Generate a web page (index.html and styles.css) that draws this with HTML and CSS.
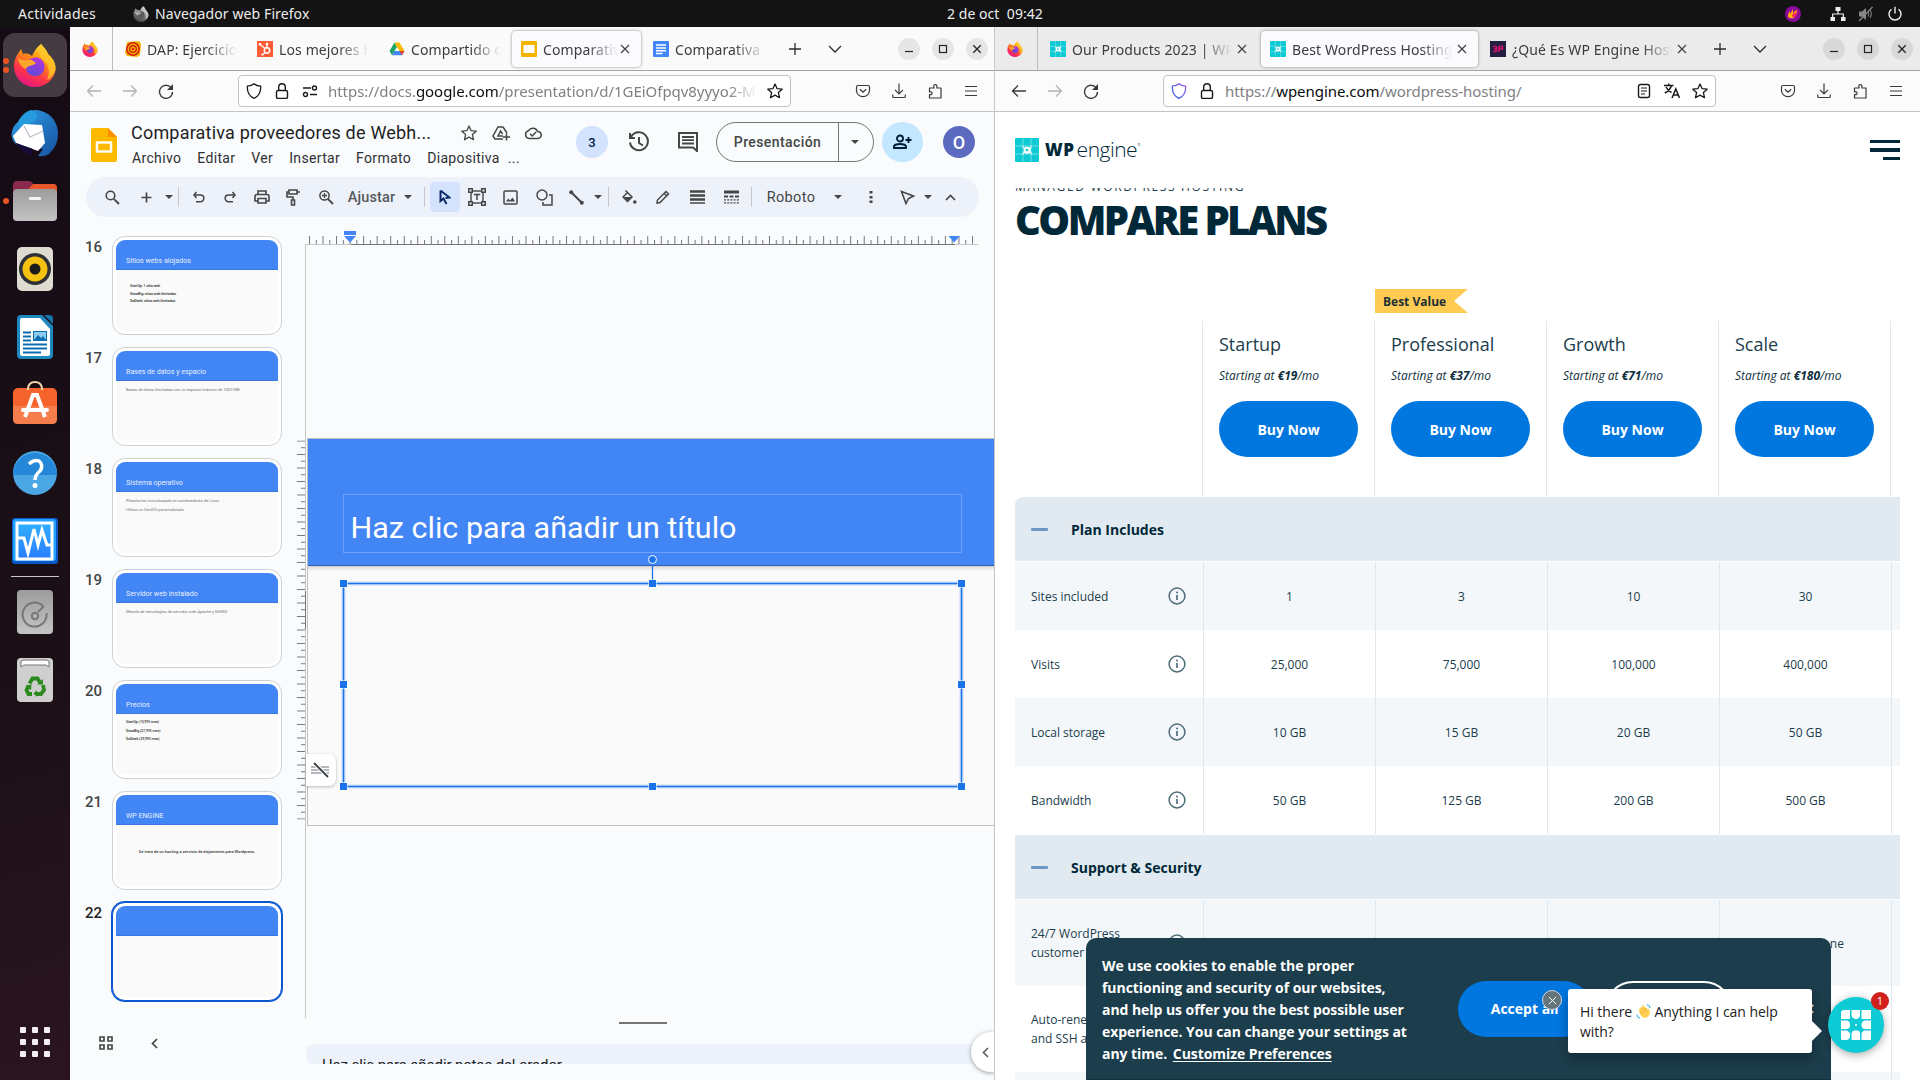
FILE: index.html
```html
<!DOCTYPE html>
<html lang="es">
<head>
<meta charset="utf-8">
<title>Escritorio</title>
<link rel="stylesheet" href="styles.css">
</head>
<body>
<svg width="0" height="0" class="sprite">
  <defs>
    <linearGradient id="gFox" x1=".8" y1="0" x2=".3" y2="1"><stop offset="0" stop-color="#fff44f"/><stop offset=".35" stop-color="#ff980e"/><stop offset=".7" stop-color="#ff3647"/><stop offset="1" stop-color="#e31587"/></linearGradient>
    <linearGradient id="gGlobe" x1=".7" y1="0" x2=".3" y2="1"><stop offset="0" stop-color="#b833e1"/><stop offset="1" stop-color="#5a4bd6"/></linearGradient>
    <linearGradient id="gGray" x1="0" y1="0" x2="0" y2="1"><stop offset="0" stop-color="#9c9c9c"/><stop offset="1" stop-color="#c4c4c4"/></linearGradient>
    <linearGradient id="gBlue" x1="0" y1="0" x2="0" y2="1"><stop offset="0" stop-color="#30b0ff"/><stop offset="1" stop-color="#2a7cff"/></linearGradient>
    <linearGradient id="gBird" x1="0" y1="0" x2="1" y2="1"><stop offset="0" stop-color="#2fa0e8"/><stop offset="1" stop-color="#17509f"/></linearGradient>
    <linearGradient id="gShield" x1="0" y1="1" x2="1" y2="0"><stop offset="0" stop-color="#2a62e8"/><stop offset="1" stop-color="#a05ae8"/></linearGradient>
  </defs>
  <symbol id="fox" viewBox="0 0 44 44">
    <path d="M28 1C31 4 34 8 35 11C41 16 43 22 42.500 27C41 37 32 44 22 44C11 44 2 36 1 25C.5 17 4 12 6 9L8 6L10 11C14 10 17 11 19 13C21 8 24 4 28 1Z" fill="url(#gFox)"/>
    <path d="M28 1C31 4 34 8 35 11C41 16 43 22 42.500 27C41 32 37 36 34 37C38 28 35 20 30 17C26 14 25 7 28 1Z" fill="#ffc529" opacity=".8"/>
    <path d="M13 23C14 16 22 12 28 16C33 20 33 28 27 32C20 35 12 31 13 23Z" fill="url(#gGlobe)"/>
    <path d="M5 15C9 18 14 17 19 17L23 20C20 23 14 22 13 26C10 25 6 22 5 15Z" fill="#ffa72a"/>
  </symbol>
  <symbol id="wpe" viewBox="0 0 24 24">
    <rect width="24" height="24" rx="1" fill="#0ecad4"/>
    <path d="M8 0V24M16 0V24M0 8H24M0 16H24" stroke="#8ce6ea" stroke-width=".8"/>
    <path d="M6.500 7L9.500 9.500Q12 8.200 14.500 9.500L17 7L16 10Q15 12 16 14L17.500 17L14.500 15Q12 16.300 9.500 15L6.500 17.500L8.500 14Q9.500 12 8.500 10Z" fill="#fff"/>
    <circle cx="12" cy="12" r="1.300" fill="#0ecad4"/>
  </symbol>
  <symbol id="back" viewBox="0 0 16 16"><path d="M15 8H1.500M7 2.500L1.500 8L7 13.500" fill="none" stroke="currentColor" stroke-width="1.300"/></symbol>
  <symbol id="fwd" viewBox="0 0 16 16"><path d="M1 8H14.500M9 2.500L14.500 8L9 13.500" fill="none" stroke="currentColor" stroke-width="1.300"/></symbol>
  <symbol id="reload" viewBox="0 0 16 16"><path d="M13.600 5.500A6.500 6.500 0 1 0 14.500 9" fill="none" stroke="currentColor" stroke-width="1.400"/><path d="M15 1V7H9Z" fill="currentColor"/></symbol>
  <symbol id="shield" viewBox="0 0 16 16"><path d="M8 .8C9.500 2.200 12 3 14.600 3.200C15 8 13 13 8 15.400C3 13 1 8 1.400 3.200C4 3 6.500 2.200 8 .8Z" fill="none" stroke="currentColor" stroke-width="1.300"/></symbol>
  <symbol id="lock" viewBox="0 0 16 16"><rect x="2.500" y="7.500" width="11" height="8" rx="1.500" fill="none" stroke="currentColor" stroke-width="1.400"/><path d="M4.700 7.500V4A3.300 3.300 0 0 1 11.300 4V7.500" fill="none" stroke="currentColor" stroke-width="1.400"/></symbol>
  <symbol id="perm" viewBox="0 0 16 16"><path d="M1 5H9M8 11.500H15" stroke="currentColor" stroke-width="1.400"/><circle cx="12.500" cy="5" r="2" fill="none" stroke="currentColor" stroke-width="1.400"/><circle cx="3.500" cy="11.500" r="2" fill="none" stroke="currentColor" stroke-width="1.400"/></symbol>
  <symbol id="star" viewBox="0 0 16 16"><path d="M8 1L10.100 5.700L15.200 6.200L11.400 9.600L12.500 14.700L8 12.100L3.500 14.700L4.600 9.600L.8 6.200L5.900 5.700Z" fill="none" stroke="currentColor" stroke-width="1.300" stroke-linejoin="round"/></symbol>
  <symbol id="pocket" viewBox="0 0 16 16"><path d="M3 2.500H13Q14.500 2.500 14.500 4V7.500A6.500 6.200 0 0 1 1.500 7.500V4Q1.500 2.500 3 2.500Z M4.800 6.300L8 9.300L11.200 6.300" fill="none" stroke="currentColor" stroke-width="1.200"/></symbol>
  <symbol id="dl" viewBox="0 0 16 16"><path d="M8 .5V10.500M4 6.800L8 10.800L12 6.800M1.700 11.500V13.500Q1.700 14.500 2.800 14.500H13.200Q14.300 14.500 14.300 13.500V11.500" fill="none" stroke="currentColor" stroke-width="1.200"/></symbol>
  <symbol id="ext" viewBox="0 0 16 16"><path d="M2.500 15V11.500C6 12.500 6 8 2.500 9V5H7C5.500 .3 11 .3 9.800 5H14V15Z" fill="none" stroke="currentColor" stroke-width="1.200" stroke-linejoin="round"/></symbol>
  <symbol id="menu" viewBox="0 0 16 16"><path d="M2 3.500H14M2 8H14M2 12.500H14" stroke="currentColor" stroke-width="1.200"/></symbol>
  <symbol id="x" viewBox="0 0 10 10"><path d="M1 1L9 9M9 1L1 9" stroke="currentColor" stroke-width="1.100"/></symbol>
  <symbol id="plus" viewBox="0 0 14 14"><path d="M7 1V13M1 7H13" stroke="currentColor" stroke-width="1.300"/></symbol>
  <symbol id="chev" viewBox="0 0 14 14"><path d="M1 4L7 10L13 4" fill="none" stroke="currentColor" stroke-width="1.300"/></symbol>
  <symbol id="reader" viewBox="0 0 16 16"><rect x="2.500" y="1.500" width="11" height="13" rx="2" fill="none" stroke="currentColor" stroke-width="1.400"/><path d="M5 5H11M5 8H11M5 11H9" stroke="currentColor" stroke-width="1.200"/></symbol>
  <symbol id="translate" viewBox="0 0 16 16"><path d="M0 2.500H9.500M4.700 .5V2.500M7.500 2.500Q6 7.500 .8 10M2 4Q4 8 7.500 9.500M8 15L11.800 6L15.500 15M9.300 12H14.300" fill="none" stroke="currentColor" stroke-width="1.500"/></symbol>
  <symbol id="wmin" viewBox="0 0 22 22"><circle cx="11" cy="11" r="11" fill="#000" opacity=".08"/><path d="M7 13.500H15" stroke="#222" stroke-width="1.200"/></symbol>
  <symbol id="wmax" viewBox="0 0 22 22"><circle cx="11" cy="11" r="11" fill="#000" opacity=".08"/><rect x="7.500" y="7.500" width="7" height="7" fill="none" stroke="#222" stroke-width="1.200"/></symbol>
  <symbol id="wclose" viewBox="0 0 22 22"><circle cx="11" cy="11" r="11" fill="#000" opacity=".08"/><path d="M7.300 7.300L14.700 14.700M14.700 7.300L7.300 14.700" stroke="#222" stroke-width="1.300"/></symbol>
  <symbol id="caret" viewBox="0 0 8 4"><path d="M0 0H8L4 4Z" fill="currentColor"/></symbol>
  <symbol id="info" viewBox="0 0 18 18"><circle cx="9" cy="9" r="7.900" fill="none" stroke="currentColor" stroke-width="1.500"/><path d="M9 8V13" stroke="currentColor" stroke-width="1.700"/><circle cx="9" cy="5.500" r="1" fill="currentColor"/></symbol>
</svg>

<header class="topbar">
  <span class="act">Actividades</span>
  <span class="app"><svg width="16" height="16" class="mono"><use href="#fox"/></svg><span>Navegador web Firefox</span></span>
  <span class="clock">2 de oct&nbsp; 09:42</span>
  <span class="tray">
    <svg width="16" height="16" viewBox="0 0 16 16"><circle cx="8" cy="8" r="8" fill="#8a0a9c"/><path d="M3 11Q3 7 5 5V8L8 3V7L12 3.500Q12 9 9 12Q5 13 3 11Z" fill="#ffb000"/><path d="M7 10L9 5L9 8L13 5Q12 10 9 12Z" fill="#f0246c"/></svg>
    <svg class="net" width="16" height="16" viewBox="0 0 16 16"><path d="M5.500 1H10.500V5H5.500ZM.5 11H5V15H.5ZM11 11H15.500V15H11Z" fill="#eee"/><path d="M8 5V8M2.700 11V8H13.300V11" fill="none" stroke="#eee" stroke-width="1.200"/></svg>
    <svg class="vol" width="16" height="16" viewBox="0 0 16 16"><path d="M1 5.500H4L8 2V14L4 10.500H1Z" fill="#888"/><path d="M10 5.500Q11.500 8 10 10.500M12 4Q14.500 8 12 12" fill="none" stroke="#777" stroke-width="1.200"/><path d="M1 15L14.500 1" stroke="#888" stroke-width="1.300"/></svg>
    <svg width="16" height="16" viewBox="0 0 16 16"><path d="M4.500 3.200A6 6 0 1 0 11.500 3.200M8 .8V7.500" fill="none" stroke="#eee" stroke-width="1.400"/></svg>
  </span>
</header>

<div class="desktop">
<nav class="dock">
  <div class="app-tile on two"><svg width="44" height="44"><use href="#fox"/></svg></div>
  <div class="app-tile"><svg width="48" height="48" viewBox="0 0 48 48"><path d="M7 13Q14 0 26 1Q44 4 47 22Q48 36 38 45Q33 48 27 47L32 40L14 38Q2 38 .5 26Q1 17 7 13Z" fill="url(#gBird)"/><path d="M7 13Q12 3 20 1Q29 4 25 11L15 17L9 22Z" fill="#279be0"/><path d="M2 27L13 15L31 16L34 34L27 42L5 34Z" fill="#fff"/><path d="M13 17L19 28L32 22" fill="none" stroke="#b9bec8" stroke-width="1.200"/><path d="M3 32Q9 42 20 47L22 40L5 34Z" fill="#160b38"/></svg></div>
  <div class="app-tile one"><svg width="46" height="42" viewBox="0 0 46 42"><path d="M1 12V5Q1 1 5 1H16Q20 1 21 4H41Q45 4 45 8V14H1Z" fill="#8b2a4c"/><path d="M21 4H41Q45 4 45 8V14H12Z" fill="#e9562a"/><rect x="1" y="9" width="44" height="32" rx="4" fill="url(#gGray)"/><rect x="17" y="17" width="12" height="3" rx="1" fill="#f4f4f4"/></svg></div>
  <div class="app-tile"><svg width="38" height="46" viewBox="0 0 38 46"><rect x="1" y="1" width="36" height="44" rx="5" fill="#dedbd0"/><circle cx="19" cy="23" r="16" fill="#2f3136"/><circle cx="19" cy="23" r="12.500" fill="#f5c211"/><circle cx="19" cy="23" r="5.500" fill="#1b1b1b"/></svg></div>
  <div class="app-tile"><svg width="38" height="46" viewBox="0 0 38 46"><path d="M5 1H26L37 12V41Q37 45 33 45H5Q1 45 1 41V5Q1 1 5 1Z" fill="#1e88c0"/><path d="M28 1H33Q37 1 37 5V10Z" fill="#1574a8"/><path d="M4 6Q4 4 6 4H24L34 15V40Q34 42 32 42H6Q4 42 4 40Z" fill="#fff"/><path d="M7 18.500H15M7 22.500H15M7 26.500H15M7 30.500H31M7 34.500H31M7 38.500H25" stroke="#0b6db0" stroke-width="2"/><rect x="17.500" y="17.500" width="13" height="9" fill="#8ccaf0" stroke="#0b6db0"/><path d="M18 26L22 21L25 24L27 22L30 26Z" fill="#0b6db0"/></svg></div>
  <div class="app-tile store"><svg width="46" height="44" viewBox="0 0 46 44"><rect x="1" y="7" width="44" height="36" rx="5" fill="#f4642c"/><path d="M1 25H45V38Q45 43 40 43H6Q1 43 1 38Z" fill="#f67e4c"/><path d="M16 9V7Q17 1 23 1T30 7V9" fill="none" stroke="#f3d2a8" stroke-width="2"/><path d="M13 36L21 14H25L33 36" fill="none" stroke="#fff" stroke-width="4"/><path d="M11 29H35" stroke="#fff" stroke-width="4" stroke-linecap="round"/></svg></div>
  <div class="app-tile"><svg width="46" height="46" viewBox="0 0 46 46"><circle cx="23" cy="23" r="22" fill="#4aa7e4"/><path d="M1 25A22 22 0 0 1 45 25Z" fill="#2487d8"/><path d="M17 14Q22 9 27 11Q32 15 28 21Q23 25 23 30" fill="none" stroke="#fff" stroke-width="3.500"/><circle cx="23" cy="35.500" r="2.500" fill="#fff"/></svg></div>
  <div class="app-tile"><svg width="46" height="46" viewBox="0 0 46 46"><rect x="0" y="0" width="46" height="46" rx="3" fill="#0a58c8"/><rect x="1" y="1" width="43" height="42" rx="3" fill="#25a0ff"/><rect x="5" y="5" width="35" height="36" fill="url(#gBlue)" stroke="#fff" stroke-width="3"/><path d="M6 20H12L16 35L22 11L26 27L30 12L35 27H40" fill="none" stroke="#fff" stroke-width="3"/></svg></div>
  <hr class="dock-sep">
  <div class="app-tile"><svg width="38" height="46" viewBox="0 0 38 46"><rect x="1" y="1" width="36" height="44" rx="4" fill="url(#gGray)"/><path d="M27 17A12 12 0 1 0 30.500 24" fill="none" stroke="#777" stroke-width="2"/><path d="M22 23L28 17" stroke="#777" stroke-width="2"/><circle cx="19" cy="27" r="3.200" fill="none" stroke="#777" stroke-width="2"/></svg></div>
  <div class="app-tile"><svg width="38" height="46" viewBox="0 0 38 46"><rect x="1" y="1" width="36" height="44" rx="4" fill="#cfcfcf"/><path d="M5 10V5Q5 3 8 3H30Q33 3 33 5V10L30 8H8Z" fill="#fff" stroke="#777"/><path d="M13.500 26.500L16.500 21.500H21.500L24 25.500M27 28L28 33L25 37H20M16 37H12.500L10.500 33L13 28.500" fill="none" stroke="#2b8a1e" stroke-width="3.800"/><path d="M21 27.500H27V22ZM21 33V40L17.500 36.500ZM9 29L15.500 27.500L15 33Z" fill="#2b8a1e"/></svg></div>
  <div class="apps-grid"><i></i><i></i><i></i><i></i><i></i><i></i><i></i><i></i><i></i></div>
</nav>

<section class="win left-win">
  <div class="tabbar">
    <div class="pinned"><svg width="16" height="16"><use href="#fox"/></svg></div>
    <div class="tab"><svg width="16" height="16" viewBox="0 0 16 16"><path d="M2 1L14 0L16 3L15 14L12 16L2 15L0 12Z" fill="#f2b705"/><circle cx="8" cy="8" r="6.200" fill="none" stroke="#d81e05" stroke-width="1.600"/><circle cx="8" cy="8" r="3.300" fill="none" stroke="#d81e05" stroke-width="1.400"/><circle cx="8" cy="8" r="1.200" fill="#d81e05"/></svg><span class="lbl">DAP: Ejercicios</span></div>
    <div class="tab"><svg width="16" height="16" viewBox="0 0 16 16"><rect width="16" height="16" fill="#ff5c35"/><circle cx="10" cy="9.500" r="2.700" fill="none" stroke="#fff" stroke-width="1.500"/><path d="M2.500 3L8 7.500M10 3V7M8 11.500L5.500 14" stroke="#fff" stroke-width="1.200"/><circle cx="3" cy="3.200" r="1.300" fill="#fff"/><circle cx="10" cy="3" r="1.300" fill="#fff"/><circle cx="5.300" cy="13.500" r="1.100" fill="#fff"/></svg><span class="lbl">Los mejores host</span></div>
    <div class="tab"><svg width="16" height="16" viewBox="0 0 16 16"><path d="M5.500 1.500L.5 10L3 14.300L8 5.700Z" fill="#1ea362"/><path d="M5.500 1.500H10.500L15.500 10H10.500Z" fill="#ffba00"/><path d="M3 14.300L5.500 10H15.500L13 14.300Z" fill="#4285f4"/><path d="M10.500 10H15.500L13 14.300Z" fill="#ea4335"/></svg><span class="lbl">Compartido con</span></div>
    <div class="tab active"><svg width="16" height="16" viewBox="0 0 16 16"><rect width="16" height="16" rx="1" fill="#f4b400"/><rect x="2.500" y="4" width="11" height="8" fill="#fff"/></svg><span class="lbl">Comparativa</span><svg class="tx" width="10" height="10"><use href="#x"/></svg></div>
    <div class="tab"><svg width="16" height="16" viewBox="0 0 16 16"><rect width="16" height="16" rx="1" fill="#4285f4"/><path d="M3 4H13M3 7H13M3 9.800H13M3 12.500H9.500" stroke="#fff" stroke-width="1.500"/></svg><span class="lbl">Comparativa d</span></div>
    <div class="tbtn plus"><svg width="14" height="14"><use href="#plus"/></svg></div>
    <div class="tbtn"><svg width="14" height="14"><use href="#chev"/></svg></div>
    <div class="wbtns"><svg width="22" height="22"><use href="#wmin"/></svg><svg width="22" height="22"><use href="#wmax"/></svg><svg width="22" height="22"><use href="#wclose"/></svg></div>
  </div>
  <div class="navbar">
    <span class="nb dis"><svg width="16" height="16"><use href="#back"/></svg></span>
    <span class="nb dis"><svg width="16" height="16"><use href="#fwd"/></svg></span>
    <span class="nb"><svg width="16" height="16"><use href="#reload"/></svg></span>
    <div class="url">
      <span class="ub"><svg width="16" height="16"><use href="#shield"/></svg></span><span class="ub"><svg width="16" height="16"><use href="#lock"/></svg></span><span class="ub"><svg width="16" height="16"><use href="#perm"/></svg></span>
      <span class="addr fade">https://docs.<b>google.com</b>/presentation/d/1GEiOfpqv8yyyo2-M</span>
      <span class="ub"><svg width="16" height="16"><use href="#star"/></svg></span>
    </div>
    <div class="nav-right"><span class="nb"><svg width="16" height="16"><use href="#pocket"/></svg></span><span class="nb"><svg width="16" height="16"><use href="#dl"/></svg></span><span class="nb"><svg width="16" height="16"><use href="#ext"/></svg></span><span class="nb"><svg width="16" height="16"><use href="#menu"/></svg></span></div>
  </div>

  <div class="slides">
    <div class="doc-head">
      <svg class="doc-ico" width="26" height="34" viewBox="0 0 26 34"><path d="M2 0H17L26 9V32Q26 34 24 34H2Q0 34 0 32V2Q0 0 2 0Z" fill="#ffba00"/><path d="M17 0L26 9H17Z" fill="#ff9100"/><rect x="6" y="14.500" width="14" height="9" fill="none" stroke="#fff" stroke-width="2.400"/></svg>
      <div class="doc-meta">
        <div class="title-row">
          <span class="doc-title">Comparativa proveedores de Webh...</span>
          <svg width="16" height="16"><use href="#star"/></svg>
          <svg width="18" height="16" viewBox="0 0 18 16"><path d="M11 14H3L1 11L6 2H11L15 8M11 11H6L8.500 6L10.500 9M14.500 8.500V15.500M11 12H18" fill="none" stroke="currentColor" stroke-width="1.500"/></svg>
          <svg width="18" height="14" viewBox="0 0 18 14"><path d="M5 12.500A4 4 0 0 1 4.500 4.700A5 5 0 0 1 13.500 5.500A3.500 3.500 0 0 1 14 12.500Z" fill="none" stroke="currentColor" stroke-width="1.500"/><path d="M6 7.800L8.200 10L12 6" fill="none" stroke="currentColor" stroke-width="1.500"/></svg>
        </div>
        <div class="menus"><span>Archivo</span><span>Editar</span><span>Ver</span><span>Insertar</span><span>Formato</span><span>Diapositiva</span><span class="more">...</span></div>
      </div>
      <div class="doc-actions">
        <span class="count">3</span>
        <svg class="hist" width="22" height="22" viewBox="0 0 22 22"><path d="M3 6A9 9 0 1 1 2 11.500M2 2V7H7M11 6V12L15 14.500" fill="none" stroke="currentColor" stroke-width="2"/></svg>
        <svg class="comm" width="20" height="20" viewBox="0 0 20 20"><path d="M1 1H19V19L15 15.500H1Z" fill="none" stroke="currentColor" stroke-width="2"/><path d="M4 5H16M4 8.200H16M4 11.500H16" stroke="currentColor" stroke-width="1.800"/></svg>
        <div class="present"><span>Presentación</span><i><svg width="8" height="4"><use href="#caret"/></svg></i></div>
        <span class="share"><svg width="20" height="16" viewBox="0 0 20 16"><circle cx="7" cy="4.500" r="3" fill="none" stroke="currentColor" stroke-width="1.900"/><path d="M1 14V12Q2.500 10 7 10T13 12V14ZM15.500 3V9M12.500 6H18.500" fill="none" stroke="currentColor" stroke-width="1.900"/></svg></span>
        <span class="avatar">O</span>
      </div>
    </div>

    <div class="toolbar">
      <span class="w33"><svg width="15" height="15" viewBox="0 0 15 15"><circle cx="5.500" cy="5.500" r="4.300" fill="none" stroke="currentColor" stroke-width="1.600"/><path d="M8.800 8.800L14 14" stroke="currentColor" stroke-width="1.900"/></svg></span>
      <span class="w34"><svg width="11" height="11" viewBox="0 0 11 11"><path d="M5.500 .5V10.500M.5 5.500H10.500" stroke="currentColor" stroke-width="1.700"/></svg></span>
      <span class="w11"><svg width="8" height="4"><use href="#caret"/></svg></span>
      <span class="w8"><i class="sep"></i></span>
      <span class="w33"><svg width="12" height="12" viewBox="0 0 12 12"><path d="M3.500 1L1 4L3.500 7M1 4H7.500A3.300 3.300 0 0 1 7.500 10.700H3" fill="none" stroke="currentColor" stroke-width="1.500"/></svg></span>
      <span class="w30"><svg width="12" height="12" viewBox="0 0 12 12"><path d="M8.500 1L11 4L8.500 7M11 4H4.500A3.300 3.300 0 0 0 4.500 10.700H9" fill="none" stroke="currentColor" stroke-width="1.500"/></svg></span>
      <span class="w34"><svg width="16" height="14" viewBox="0 0 16 14"><path d="M4 4V1H12V4M4 11H1V6.500Q1 4.500 3 4.500H13Q15 4.500 15 6.500V11H12M4 8.500H12V13H4Z" fill="none" stroke="currentColor" stroke-width="1.600"/></svg></span>
      <span class="w28"><svg width="15" height="17" viewBox="0 0 15 17"><path d="M3 1H11V5H3ZM3 3H1V8H7V11M11 3H14M5.500 11H8.500V16H5.500Z" fill="none" stroke="currentColor" stroke-width="1.600"/></svg></span>
      <span class="w38"><svg width="15" height="15" viewBox="0 0 15 15"><circle cx="5.500" cy="5.500" r="4.600" fill="none" stroke="currentColor" stroke-width="1.500"/><path d="M9 9L14 14" stroke="currentColor" stroke-width="1.800"/><path d="M5.500 3V8M3 5.500H8" stroke="currentColor" stroke-width="1.300"/></svg></span>
      <span class="w53 txt">Ajustar</span>
      <span class="w20"><svg width="8" height="4"><use href="#caret"/></svg></span>
      <span class="w12"><i class="sep"></i></span>
      <span class="w30 sel"><svg width="12" height="16" viewBox="0 0 12 16"><path d="M1.500 1.500V12L4.500 9.500L7.500 15M1.500 1.500L10.500 8.500L6.500 9" fill="none" stroke="#0b2a66" stroke-width="2"/></svg></span>
      <span class="w34"><svg width="18" height="18" viewBox="0 0 18 18"><rect x="3" y="3" width="12" height="12" fill="none" stroke="currentColor" stroke-width="1.400"/><path d="M0 0H5V5H0ZM13 0H18V5H13ZM0 13H5V18H0ZM13 13H18V18H13Z" fill="currentColor"/><path d="M1.500 1.500H3.500V3.500H1.500ZM14.500 1.500H16.500V3.500H14.500ZM1.500 14.500H3.500V16.500H1.500ZM14.500 14.500H16.500V16.500H14.500Z" fill="#edf2fa"/><path d="M5.800 6.500H12.200M9 6.500V12" stroke="currentColor" stroke-width="1.500"/></svg></span>
      <span class="w32"><svg width="15" height="15" viewBox="0 0 15 15"><rect x="1" y="1" width="13" height="13" rx="1" fill="none" stroke="currentColor" stroke-width="1.500"/><path d="M3 11.500L5.200 8.500L7 10.500L9.500 7.500L12 11.500Z" fill="currentColor"/></svg></span>
      <span class="w36"><svg width="17" height="17" viewBox="0 0 17 17"><circle cx="6" cy="6" r="5" fill="none" stroke="currentColor" stroke-width="1.500"/><path d="M13 6H16V16H7V13" fill="none" stroke="currentColor" stroke-width="1.500"/></svg></span>
      <span class="w28"><svg width="15" height="15" viewBox="0 0 15 15"><path d="M2 2L13 13" stroke="currentColor" stroke-width="2"/><circle cx="2.200" cy="2.200" r="2" fill="currentColor"/><circle cx="12.800" cy="12.800" r="2" fill="currentColor"/></svg></span>
      <span class="w16"><svg width="8" height="4"><use href="#caret"/></svg></span>
      <span class="w4"><i class="sep"></i></span>
      <span class="w38"><svg width="15" height="15" viewBox="0 0 15 15"><path d="M3.500 .5L5.500 2.500M5.500 2.500L10 7L5.500 11.500L1 7Z" fill="none" stroke="currentColor" stroke-width="1.500"/><path d="M1.500 7H9.500L5.500 11Z" fill="currentColor"/><circle cx="12.800" cy="12" r="1.800" fill="currentColor"/></svg></span>
      <span class="w30"><svg width="14" height="14" viewBox="0 0 14 14"><path d="M1 13L1.500 10L10 1.500L12.500 4L4 12.500ZM8.300 3.500L10.500 5.700" fill="none" stroke="currentColor" stroke-width="1.500"/></svg></span>
      <span class="w38"><svg width="15" height="14" viewBox="0 0 15 14"><path d="M0 1.500H15M0 5.500H15M0 9.500H15" stroke="currentColor" stroke-width="2.400"/><path d="M0 13H15" stroke="currentColor" stroke-width="1.500"/></svg></span>
      <span class="w30"><svg width="15" height="14" viewBox="0 0 15 14"><path d="M0 2H15" stroke="currentColor" stroke-width="3"/><path d="M0 6.500H15" stroke="currentColor" stroke-width="2" stroke-dasharray="4 1.500"/><path d="M0 9.800H15M0 12.800H15" stroke="currentColor" stroke-width="1.300" stroke-dasharray="2 1.200"/></svg></span>
      <span class="w10"><i class="sep"></i></span>
      <span class="w69 txt rob">Roboto</span>
      <span class="w26"><svg width="8" height="4"><use href="#caret"/></svg></span>
      <span class="w40"><svg width="4" height="14" viewBox="0 0 4 14"><path d="M.5 1H3.500V3.500H.5ZM.5 6H3.500V8.500H.5ZM.5 10.500H3.500V13H.5Z" fill="currentColor"/></svg></span>
      <span class="w32"><svg width="15" height="15" viewBox="0 0 15 15"><path d="M1.500 1.500L13.500 6L8.500 8.500L6 13.500Z" fill="none" stroke="currentColor" stroke-width="1.600"/></svg></span>
      <span class="w10"><svg width="8" height="4"><use href="#caret"/></svg></span>
      <span class="w34"><svg width="11" height="7" viewBox="0 0 11 7"><path d="M1 6L5.500 1.500L10 6" fill="none" stroke="currentColor" stroke-width="1.700"/></svg></span>
    </div>

    <div class="editor">
      <aside class="film">
        <div class="thumbs">
          <div class="th"><b>16</b><div class="card"><div class="sl"><h4>Sitios webs alojados</h4><p class="ind bold">StartUp: 1 sitio web<br>GrowBig: sitios web ilimitados<br>GoGeek: sitios web ilimitados</p></div></div></div>
          <div class="th"><b>17</b><div class="card"><div class="sl"><h4>Bases de datos y espacio</h4><p>Bases de datos ilimitadas con un espacio máximo de 1000 MB</p></div></div></div>
          <div class="th"><b>18</b><div class="card"><div class="sl"><h4>Sistema operativo</h4><p>Plataforma única basada en contenedores de Linux.<br>Utiliza un CentOS personalizado.</p></div></div></div>
          <div class="th"><b>19</b><div class="card"><div class="sl"><h4>Servidor web instalado</h4><p>Mezcla de tecnologías de servidor web Apache y NGINX</p></div></div></div>
          <div class="th"><b>20</b><div class="card"><div class="sl"><h4>Precios</h4><p class="bold">StartUp (15,99€ mes)<br>GrowBig (27,99€ mes)<br>GoGeek (39,99€ mes)</p></div></div></div>
          <div class="th"><b>21</b><div class="card"><div class="sl"><h4>WP ENGINE</h4><p class="mid bold">Se trata de un hosting o servicio de alojamiento para Wordpress.</p></div></div></div>
          <div class="th cur"><b>22</b><div class="card"><div class="sl"><h4>&nbsp;</h4></div></div></div>
        </div>
        <div class="film-foot">
          <svg width="14" height="14" viewBox="0 0 14 14"><path d="M1 1H5V5H1ZM9 1H13V5H9ZM1 9H5V13H1ZM9 9H13V13H9Z" fill="none" stroke="currentColor" stroke-width="1.700"/></svg>
          <svg width="7" height="11" viewBox="0 0 7 11"><path d="M6 1L1.500 5.500L6 10" fill="none" stroke="currentColor" stroke-width="1.700"/></svg>
        </div>
      </aside>

      <div class="stage">
        <svg class="canvas" width="704" height="801" viewBox="290 217 704 801">
          <defs>
            <pattern id="tickH" x="309" y="236" width="13.530" height="8" patternUnits="userSpaceOnUse"><path d="M0 0H1V8H0ZM6.800 4H7.800V8H6.800Z" fill="#73787c"/></pattern>
            <pattern id="tickV" x="297" y="440.500" width="8" height="13.500" patternUnits="userSpaceOnUse"><path d="M0 0H8V1H0ZM4 6.800H8V7.800H4Z" fill="#73787c"/></pattern>
            <linearGradient id="drop" x1="0" y1="0" x2="0" y2="1"><stop offset="0" stop-color="#000" stop-opacity=".32"/><stop offset=".3" stop-color="#000" stop-opacity=".12"/><stop offset="1" stop-color="#000" stop-opacity="0"/></linearGradient>
          </defs>
          <rect x="309" y="236" width="664" height="8" fill="url(#tickH)"/>
          <rect x="305" y="244" width="673" height="1" fill="#c4c7c5"/><rect x="351" y="244" width="604" height="1" fill="#757575"/>
          <rect x="297" y="440.500" width="8" height="379" fill="url(#tickV)"/>
          <rect x="305" y="244" width="1" height="774" fill="#c4c7c5"/><rect x="305" y="591" width="1" height="38" fill="#757575"/>
          <path d="M344 231H356V235H344ZM344 236H356L350 242.500ZM948.500 236H960L954 242.500Z" fill="#4285f4"/>
          <rect x="307.500" y="438.500" width="700" height="387" fill="#fafafa" stroke="#c0c0c0"/>
          <rect x="308" y="439" width="700" height="127" fill="#4285f4"/>
          <rect x="308" y="565" width="700" height="6" fill="url(#drop)"/>
          <rect x="343.500" y="494.500" width="618" height="58" fill="none" stroke="#6fa2f7"/>
          <text x="350.500" y="538" class="slide-title" textLength="386" lengthAdjust="spacingAndGlyphs">Haz clic para añadir un título</text>
          <rect x="343.500" y="583.500" width="618" height="203" fill="none" stroke="#c5d8f9" stroke-width="4"/>
          <rect x="343.500" y="583.500" width="618" height="203" fill="none" stroke="#1a73e8" stroke-width="1.400"/>
          <path d="M652.500 564V583" stroke="#1a73e8" stroke-width="1.300"/><circle cx="652.500" cy="559.500" r="4" fill="#1a73e8" stroke="#fff"/>
          <path d="M340 580h7v7h-7zM649 580h7v7h-7zM958 580h7v7h-7zM340 681h7v7h-7zM958 681h7v7h-7zM340 783h7v7h-7zM649 783h7v7h-7zM958 783h7v7h-7z" fill="#1a73e8" stroke="#fff" stroke-width="1" paint-order="stroke"/>
        </svg>
        <div class="chip"><svg width="18" height="16" viewBox="0 0 18 16"><path d="M0 5H18M0 8H18M0 11H18" stroke="#9aa0a6" stroke-width="1.500"/><path d="M3 1L17 15" stroke="#fff" stroke-width="4"/><path d="M3 1L17 15" stroke="#3c4043" stroke-width="1.800"/></svg></div>
        <div class="grip"></div>
        <div class="notes">Haz clic para añadir notas del orador</div>
        <div class="side-toggle"><svg width="7" height="11" viewBox="0 0 7 11"><path d="M6 1L1.500 5.500L6 10" fill="none" stroke="#5f6368" stroke-width="1.700"/></svg></div>
      </div>
    </div>
  </div>
</section>

<section class="win right-win">
  <div class="tabbar">
    <div class="pinned"><svg width="16" height="16"><use href="#fox"/></svg></div>
    <div class="tab wide"><svg width="16" height="16"><use href="#wpe"/></svg><span class="lbl">Our Products 2023 | WP Eng</span><svg class="tx" width="10" height="10"><use href="#x"/></svg></div>
    <div class="tab wide active"><svg width="16" height="16"><use href="#wpe"/></svg><span class="lbl">Best WordPress Hosting f</span><svg class="tx" width="10" height="10"><use href="#x"/></svg></div>
    <div class="tab wide"><svg width="16" height="16" viewBox="0 0 16 16"><rect width="16" height="16" fill="#241f42"/><path d="M3 5.500H6L7 7L5 8L7 9.500L6 10.500H3M9 11V5.500H12.500V8H9" fill="none" stroke="#d3126b" stroke-width="1.400"/></svg><span class="lbl">¿Qué Es WP Engine Hosting</span><svg class="tx" width="10" height="10"><use href="#x"/></svg></div>
    <div class="tbtn plus"><svg width="14" height="14"><use href="#plus"/></svg></div>
    <div class="tbtn"><svg width="14" height="14"><use href="#chev"/></svg></div>
    <div class="wbtns"><svg width="22" height="22"><use href="#wmin"/></svg><svg width="22" height="22"><use href="#wmax"/></svg><svg width="22" height="22"><use href="#wclose"/></svg></div>
  </div>
  <div class="navbar">
    <span class="nb"><svg width="16" height="16"><use href="#back"/></svg></span>
    <span class="nb dis"><svg width="16" height="16"><use href="#fwd"/></svg></span>
    <span class="nb"><svg width="16" height="16"><use href="#reload"/></svg></span>
    <div class="url">
      <span class="ub blue"><svg width="16" height="16" viewBox="0 0 16 16"><path d="M8 .8C9.500 2.200 12 3 14.600 3.200C15 8 13 13 8 15.400C3 13 1 8 1.400 3.200C4 3 6.500 2.200 8 .8Z" fill="none" stroke="url(#gShield)" stroke-width="1.300"/></svg></span><span class="ub"><svg width="16" height="16"><use href="#lock"/></svg></span>
      <span class="addr">https://<b>wpengine.com</b>/wordpress-hosting/</span>
      <span class="ub"><svg width="16" height="16"><use href="#reader"/></svg></span><span class="ub"><svg width="16" height="16"><use href="#translate"/></svg></span><span class="ub"><svg width="16" height="16"><use href="#star"/></svg></span>
    </div>
    <div class="nav-right"><span class="nb"><svg width="16" height="16"><use href="#pocket"/></svg></span><span class="nb"><svg width="16" height="16"><use href="#dl"/></svg></span><span class="nb"><svg width="16" height="16"><use href="#ext"/></svg></span><span class="nb"><svg width="16" height="16"><use href="#menu"/></svg></span></div>
  </div>

  <main class="site">
    <header class="site-head">
      <svg width="24" height="24"><use href="#wpe"/></svg>
      <span class="brand-b">WP</span><span class="brand-l">engine<sup>°</sup></span>
      <svg class="burger" width="30" height="20" viewBox="0 0 30 20"><path d="M0 0H30V3H0ZM0 8H30V12H0ZM13 17H30V20H13Z" fill="#002838"/></svg>
    </header>
    <div class="site-body">
      <p class="eyebrow">MANAGED WORDPRESS HOSTING</p>
      <h1>COMPARE PLANS</h1>
      <div class="plans">
        <div></div>
        <div class="plan"><h3>Startup</h3><p>Starting at <b>€19</b>/mo</p><a class="buy">Buy Now</a></div>
        <div class="plan"><span class="ribbon">Best Value</span><h3>Professional</h3><p>Starting at <b>€37</b>/mo</p><a class="buy">Buy Now</a></div>
        <div class="plan"><h3>Growth</h3><p>Starting at <b>€71</b>/mo</p><a class="buy">Buy Now</a></div>
        <div class="plan"><h3>Scale</h3><p>Starting at <b>€180</b>/mo</p><a class="buy">Buy Now</a></div>
        <div class="plan end"></div>
      </div>
      <div class="group first"><i></i>Plan Includes</div>
      <div class="row alt"><span>Sites included<svg width="18" height="18"><use href="#info"/></svg></span><span>1</span><span>3</span><span>10</span><span>30</span><span></span></div>
      <div class="row"><span>Visits<svg width="18" height="18"><use href="#info"/></svg></span><span>25,000</span><span>75,000</span><span>100,000</span><span>400,000</span><span></span></div>
      <div class="row alt"><span>Local storage<svg width="18" height="18"><use href="#info"/></svg></span><span>10 GB</span><span>15 GB</span><span>20 GB</span><span>50 GB</span><span></span></div>
      <div class="row"><span>Bandwidth<svg width="18" height="18"><use href="#info"/></svg></span><span>50 GB</span><span>125 GB</span><span>200 GB</span><span>500 GB</span><span></span></div>
      <div class="group"><i></i>Support &amp; Security</div>
      <div class="row alt tall"><span><em>24/7 WordPress customer support</em><svg width="18" height="18"><use href="#info"/></svg></span><span></span><span></span><span></span><span>Chat &amp; phone</span><span></span></div>
      <div class="row tall"><span><em>Auto-renewing SSL and SSH access</em></span><span></span><span></span><span></span><span></span><span></span></div>
      <div class="row alt tall"><span></span><span></span><span></span><span></span><span></span><span></span></div>
    </div>

    <div class="cookie">
      <p>We use cookies to enable the proper functioning and security of our websites, and help us offer you the best possible user experience. You can change your settings at any time. <u>Customize Preferences</u></p>
      <a class="accept">Accept all</a><a class="decline"></a><i class="cx">×</i>
    </div>
    <div class="hello">Hi there <svg width="15" height="15" viewBox="0 0 15 15"><path d="M3 5L5 3L6 4L6 1.500L8 1.500L9 4L10 3L12 6L13 4.500L14 9Q13 13 9 14Q5 13 3.500 9Z" fill="#ffd04f"/><path d="M6 4L9 8M9 4L11 7M4 7L7 10" stroke="#eda83a" stroke-width=".8"/><path d="M11 .8Q13.500 1.200 14.200 4M.8 10.500Q1 13.500 4 14.200" fill="none" stroke="#5fb4e8" stroke-width="1.200"/></svg> Anything I can help with?</div>
    <span class="dismiss"><svg width="9" height="9"><use href="#x"/></svg></span>
    <div class="chat"><svg width="30" height="30" viewBox="0 0 30 30"><path d="M3 0H9V9H0V3Q0 0 3 0ZM10.500 0H19V6Q18 9 15 9T10.500 6ZM20.500 0H29Q30 0 30 1V9H20.500ZM0 10.500H6Q9 11 9 15T6 19H0ZM24 10.500H30V19H24Q20.500 19 20.500 15T24 10.500ZM0 20.500H6L9 23V27Q8 30 5 30H1Q0 30 0 29ZM13 20.500H17Q19 21 19 23V30H10.500V23Q11 21 13 20.500ZM23 20.500H30V29Q30 30 29 30H20.500V23Z" fill="#fff"/><circle cx="15" cy="15" r="1" fill="#fff"/></svg><b>1</b></div>
  </main>
</section>
</div>
</body>
</html>
```
FILE: styles.css
```css
* { box-sizing: border-box; }
body { margin: 0; width: 1920px; height: 1080px; overflow: hidden; font-family: "Noto Sans", sans-serif; font-size: 14px; display: flex; flex-direction: column; }
svg { display: block; flex: none; }
.sprite { position: absolute; }
h1, h3, h4, p { margin: 0; font-weight: 400; }

/* GNOME top bar */
.topbar { height: 27px; flex: none; background: #131313; color: #ededed; display: grid; grid-template-columns: 133px 814px 1fr auto; align-items: center; font-size: 14px; letter-spacing: .1px; }
.act { padding-left: 18px; letter-spacing: .3px; }
.app { display: flex; align-items: center; gap: 6px; }
.mono { filter: grayscale(1); }
.clock { white-space: nowrap; letter-spacing: .05px; }
.tray { display: flex; justify-content: flex-end; padding-right: 17px; }
.tray .net { margin-left: 29px; }
.tray .vol { margin: 0 13px 0 12px; }

/* Dock */
.desktop { display: flex; flex: 1; min-height: 0; }
.dock { width: 70px; flex: none; padding-top: 4px; background: linear-gradient(165deg, #150b15 0, #1b1016 60%, #2a1421 100%); display: flex; flex-direction: column; align-items: center; }
.app-tile { position: relative; width: 64px; height: 64px; margin: 2px 0; border-radius: 12px; display: flex; align-items: center; justify-content: center; }
.app-tile.on { background: #453b42; }
.app-tile.store { padding-bottom: 4px; }
.app-tile.one::before, .app-tile.two::before { content: ""; position: absolute; left: 0; top: 29px; width: 6px; height: 6px; border-radius: 50%; background: #e95420; }
.app-tile.two::before { top: 25px; box-shadow: 0 9px #e95420; }
.dock-sep { width: 48px; height: 1px; border: 0; margin: 1px 0; background: #c9c5c8; }
.apps-grid { margin: auto 0 23px; display: grid; grid-template-columns: repeat(3, 6px); gap: 6px; }
.apps-grid i { width: 6px; height: 6px; border-radius: 1px; background: #f4f0f2; }

/* Browser windows */
.win { width: 925px; flex: none; display: flex; flex-direction: column; min-height: 0; overflow: hidden; color: #2b2b2f; }
.left-win { border-right: 1px solid #c6c6c9; }
.tabbar { height: 44px; flex: none; display: flex; align-items: center; background: #fafafa; border-bottom: 1px solid #a3a3a3; }
.right-win .tabbar { background: #ebebeb; }
.pinned { width: 43px; height: 43px; border-right: 1px solid #bdbdbd; display: flex; align-items: center; padding-left: 12px; }
.tab { position: relative; width: 132px; height: 43px; flex: none; display: flex; align-items: center; gap: 6px; padding: 1px 8px 0 12px; color: #3c3c40; }
.tab.wide { width: 220px; }
.tab > * { position: relative; }
.tab .lbl { flex: 1; overflow: hidden; white-space: nowrap; font-size: 14px; letter-spacing: .12px; -webkit-mask-image: linear-gradient(to left, transparent, #000 30px); }
.tab .tx { margin-left: -4px; margin-right: 3px; }
.tab.wide .tx { margin-left: -1px; }
.tab.active::before { content: ""; position: absolute; inset: 4px 0 3px 3px; border-radius: 4px; background: #fbfbfd; box-shadow: 0 0 3px rgba(0,0,0,.45); }
.tbtn { width: 36px; display: flex; justify-content: center; }
.tbtn.plus { width: 44px; }
.wbtns { margin-left: auto; padding-right: 7px; display: flex; gap: 12px; }
.left-win .wbtns { padding-right: 6px; }
.navbar { height: 41px; flex: none; display: flex; align-items: center; padding-left: 6px; background: #fbfbfb; border-bottom: 1px solid #c4c4c6; }
.nb { width: 36px; display: flex; justify-content: center; color: #3a3a3e; }
.nb.dis { color: #b4b4b6; }
.url { width: 553px; height: 32px; margin-left: 54px; border: 1px solid #c3c3c6; border-radius: 4px; background: #fff; display: flex; align-items: center; padding: 0 1px; }
.ub { width: 28px; flex: none; display: flex; justify-content: center; color: #1a1a1e; }
.addr { flex: 1; min-width: 0; overflow: hidden; white-space: nowrap; padding-left: 4px; margin-right: 2px; color: #808084; font-size: 15px; letter-spacing: -.06px; }
.addr b { font-weight: 400; color: #0c0c0d; }
.addr.fade { margin-right: 4px; letter-spacing: -.04px; -webkit-mask-image: linear-gradient(to left, transparent, #000 28px); }
.nav-right { margin-left: auto; display: flex; padding-right: 6px; }
.left-win .nav-right { padding-right: 5px; }

/* Slides editor */
.slides { flex: 1; min-height: 0; background: #f9fbfd; display: flex; flex-direction: column; font-family: Roboto, sans-serif; color: #444746; }
.doc-head { height: 65px; flex: none; display: flex; padding-left: 21px; }
.doc-ico { margin-top: 16px; }
.doc-meta { width: 445px; padding: 7px 0 0 15px; }
.title-row { display: flex; align-items: center; height: 27px; margin-left: -1px; }
.title-row svg:nth-of-type(1) { margin-right: 15px; }
.title-row svg:nth-of-type(2) { margin-right: 14px; }
.doc-title { width: 330px; font-size: 18px; line-height: 25px; padding-bottom: 1px; color: #1f1f1f; letter-spacing: .2px; white-space: nowrap; }
.menus { display: flex; gap: 16px; font-size: 14px; line-height: 24px; color: #303134; letter-spacing: .34px; }
.menus .more { margin-left: -8px; }
.doc-actions { display: flex; align-items: center; height: 60px; }
.count { width: 32px; height: 32px; border-radius: 50%; background: #d3e3fd; color: #041e49; display: flex; align-items: center; justify-content: center; font-weight: 500; font-size: 13px; margin-left: 14px; margin-right: 20px; }
.hist { margin-right: 28px; }
.comm { margin-right: 18px; }
.present { width: 158px; height: 40px; border: 1px solid #747775; border-radius: 20px; display: flex; align-items: stretch; font-weight: 500; font-size: 14px; letter-spacing: .4px; }
.present span { width: 122px; display: flex; align-items: center; justify-content: center; border-right: 1px solid #747775; }
.present i { flex: 1; display: flex; align-items: center; justify-content: center; padding-right: 3px; }
.share { width: 41px; height: 40px; border-radius: 50%; background: #c2e7ff; color: #001d35; display: flex; align-items: center; justify-content: center; margin-left: 8px; }
.avatar { width: 32px; height: 32px; border-radius: 50%; background: #5c6bc0; color: #fff; font-size: 18px; font-weight: 500; display: flex; align-items: center; justify-content: center; margin-left: 20px; }

.toolbar { height: 40px; flex: none; margin: 0 15px 0 16px; padding-left: 10px; border-radius: 20px; background: #edf2fa; display: flex; align-items: center; }
.toolbar > span { flex: none; display: flex; align-items: center; justify-content: center; }
.txt { font-size: 14.500px; font-weight: 500; letter-spacing: .1px; color: #55585a; }
.txt.rob { font-weight: 400; letter-spacing: .35px; padding-left: 1px; color: #444746; }
.sep { width: 1px; height: 20px; background: #c7c7c7; }
.sel { height: 30px; border-radius: 4px; background: #d3e3fd; }
.w4 { width: 4px; } .w8 { width: 8px; } .w10 { width: 10px; } .w11 { width: 11px; } .w12 { width: 12px; } .w16 { width: 16px; } .w20 { width: 20px; } .w26 { width: 26px; }
.w28 { width: 28px; } .w30 { width: 30px; } .w32 { width: 32px; } .w33 { width: 33px; } .w34 { width: 34px; } .w36 { width: 36px; } .w38 { width: 38px; } .w40 { width: 40px; } .w53 { width: 53px; } .w69 { width: 69px; }

.editor { flex: 1; min-height: 0; display: flex; }
.film { width: 220px; flex: none; display: flex; flex-direction: column; }
.thumbs { padding-top: 19px; display: flex; flex-direction: column; gap: 12px; }
.th { display: flex; gap: 10px; height: 99px; }
.th b { width: 32px; text-align: right; font-weight: 500; font-size: 15px; line-height: 23px; }
.th.cur b { color: #1f1f1f; }
.card { width: 170px; height: 99px; border: 1px solid #cfd3d5; border-radius: 13px; padding: 3px; background: #fff; }
.cur .card { border-color: #0b57d0; box-shadow: 0 0 0 1px #0b57d0; }
.sl { height: 91px; border-radius: 9px; overflow: hidden; background: #fafafa; }
.sl h4 { height: 30px; padding: 15px 0 0 10px; font-size: 7.100px; line-height: 12px; color: #e6efff; background: #4285f4; border-bottom: 1px solid #3a78dd; white-space: nowrap; }
.sl p { padding: 4px 0 0 10px; font-size: 4.080px; line-height: 9px; color: #777; white-space: nowrap; }
.sl p.bold { color: #333; font-weight: 500; font-size: 3.700px; line-height: 8.500px; letter-spacing: -.12px; }
.sl p.ind { padding: 13px 0 0 14px; line-height: 7.500px; }
.sl p.mid { padding: 23px 0 0; text-align: center; font-size: 4px; letter-spacing: .02px; }
.film-foot { margin: auto 0 30px 29px; display: flex; align-items: center; gap: 38px; }

.stage { position: relative; width: 704px; flex: none; overflow: hidden; }
.slide-title { font: 400 30px Roboto, sans-serif; fill: #fff; }
.chip { position: absolute; left: 16px; top: 537px; width: 30px; height: 32px; border-radius: 0 7px 7px 0; background: #fff; box-shadow: 0 1px 3px rgba(60,64,67,.35); display: flex; align-items: center; justify-content: center; padding-right: 2px; }
.grip { width: 48px; height: 2px; margin: 4px 0 0 329px; background: #757575; }
.notes { height: 20px; margin: 20px 0 0 16px; padding: 12px 0 0 16px; border-radius: 8px 0 0 8px; background: #edf2fa; overflow: hidden; color: #202124; font-size: 15px; line-height: 18px; letter-spacing: -.12px; white-space: nowrap; }
.side-toggle { position: absolute; right: 0; top: 815px; width: 23px; height: 40px; border-radius: 20px 0 0 20px; background: #fff; box-shadow: 0 1px 4px rgba(60,64,67,.5); display: flex; align-items: center; justify-content: flex-end; padding-right: 5px; }

/* WP Engine page */
.site { position: relative; flex: 1; min-height: 0; overflow: hidden; background: #fff; font-family: "Open Sans", sans-serif; color: #1c3d4c; }
.site-head { position: relative; z-index: 1; height: 76px; padding: 0 20px; background: #fff; display: flex; align-items: center; }
.brand-b { font: 800 17px "Open Sans", sans-serif; color: #002838; margin-left: 6px; line-height: 20px; letter-spacing: .6px; }
.brand-l { font: 300 21px "Open Sans", sans-serif; color: #002838; margin-left: 2px; line-height: 20px; letter-spacing: -.5px; margin-top: -3px; }
.brand-l sup { font-size: 8px; line-height: 0; }
.burger { margin-left: auto; }
.site-body { padding: 0 20px; }
.eyebrow { margin-top: -11px; font-size: 12px; line-height: 20px; letter-spacing: 1.650px; white-space: nowrap; }
h1 { margin-top: 3px; font-size: 40px; line-height: 40px; font-weight: 800; letter-spacing: -2.600px; color: #002838; }
.plans { margin-top: 81px; height: 176px; display: grid; grid-template-columns: 187px repeat(4, 172px) 1fr; }
.plan { position: relative; border-left: 1px solid #dfe8f0; padding: 11px 16px 0; }
.plan.end { padding: 0; }
.plan h3 { font-size: 18px; line-height: 24px; }
.plan p { margin: 11px 0 16px; font-size: 12px; line-height: 18px; font-style: italic; color: #0f2f3e; }
.buy { display: flex; height: 56px; align-items: center; justify-content: center; border-radius: 28px; background: #0076df; color: #fff; font-weight: 700; font-size: 14px; }
.ribbon { position: absolute; left: 0; top: -32px; width: 93px; height: 24px; padding: 1px 0 0 8px; background: #ffcb52; clip-path: polygon(0 0, 100% 0, 85% 50%, 100% 100%, 0 100%); font-size: 12px; line-height: 24px; font-weight: 700; color: #1b2f37; }
.group { height: 64px; margin-top: 1px; background: #e1e9f1; display: flex; align-items: center; gap: 23px; padding-left: 16px; font-size: 14px; font-weight: 700; color: #002838; }
.group.first { margin-top: 0; border-radius: 8px 0 0 0; }
.group i { width: 17px; height: 3px; border-radius: 1px; background: #6c97c4; }
.row { height: 68px; display: grid; grid-template-columns: 188px repeat(4, 172px) 1fr; font-size: 12px; }
.group + .row { margin-top: 1px; }
.row.alt { background: #f3f7fa; }
.row.tall { height: 86px; }
.row > span { display: flex; align-items: center; justify-content: center; border-left: 1px solid #dfe8f0; }
.row > span:first-child { border: 0; justify-content: space-between; padding: 0 17px 0 16px; line-height: 19px; color: #1c3d4c; }
.row em { font-style: normal; width: 110px; }
.row svg { color: #4f6c79; }

/* Overlays on the page */
.cookie { position: absolute; left: 91px; top: 826px; width: 745px; height: 142px; border-radius: 10px 10px 0 0; background: #1c3d4c; border-bottom: 1px solid #14303d; color: #fff; display: flex; align-items: center; padding: 0 16px; z-index: 2; }
.cookie p { width: 308px; margin-right: 48px; font-size: 14px; line-height: 22px; font-weight: 700; margin-top: 2px; letter-spacing: -.05px; }
.cookie u { margin-left: 2px; text-underline-offset: 2px; }
.accept { width: 134px; height: 56px; flex: none; border-radius: 28px; background: #0076df; font-weight: 700; display: flex; align-items: center; justify-content: center; }
.decline { width: 127px; height: 56px; margin-left: 13px; border: 2px solid #fff; border-radius: 28px; }
.cx { margin-left: 72px; font-size: 20px; font-style: normal; line-height: 14px; }
.hello { position: absolute; left: 573px; top: 877px; width: 244px; height: 64px; z-index: 3; padding: 13px 12px 0; border-radius: 3px; background: #fff; color: #222; font-size: 14px; line-height: 20px; letter-spacing: -.04px; box-shadow: 0 6px 12px rgba(0,0,0,.3); }
.hello svg { display: inline-block; vertical-align: -2px; }
.hello::after { content: ""; position: absolute; left: 244px; top: 32px; border: 10px solid transparent; border-left-color: #fff; border-right: 0; }
.dismiss { position: absolute; left: 547px; top: 878px; width: 20px; height: 20px; z-index: 4; border-radius: 50%; border: 1px solid #cfd6da; background: #66747d; color: #fff; display: flex; align-items: center; justify-content: center; }
.chat { position: absolute; left: 833px; top: 885px; width: 56px; height: 56px; z-index: 3; border-radius: 50%; background: #0ecad4; box-shadow: 0 2px 8px rgba(0,0,0,.35); display: flex; align-items: center; justify-content: center; }
.chat b { position: absolute; left: 43px; top: -5px; width: 18px; height: 18px; border-radius: 50%; background: #d0211c; color: #fff; font-size: 11px; font-weight: 400; line-height: 18px; text-align: center; }
```
